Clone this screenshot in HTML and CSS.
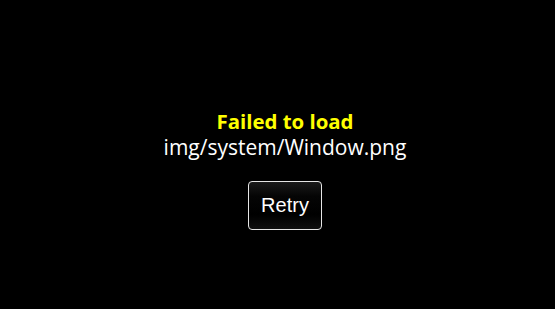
FILE: index.html
```html
<!DOCTYPE html>
<html>
<head>
<meta charset="utf-8">
<link rel="stylesheet" href="styles.css">
</head>
<body>
<div class="stage">
  <div class="error">
    <div class="title">Failed to load</div>
    <div class="path">img/system/Window.png</div>
    <button class="retry">Retry</button>
  </div>
</div>
</body>
</html>
```

FILE: styles.css
```css
html, body {
  margin: 0;
  padding: 0;
  background: #000;
  width: 555px;
  height: 309px;
  overflow: hidden;
}
.stage {
  box-sizing: border-box;
  height: 309px;
  padding: 108px 0 0 15px;
  display: flex;
  justify-content: center;
  align-items: flex-start;
}
.error {
  display: flex;
  flex-direction: column;
  align-items: center;
  font-family: "Open Sans", "Noto Sans", sans-serif;
  color: #fff;
}
.title {
  color: #ffff00;
  font-weight: 700;
  font-size: 20.4px;
  line-height: 26px;
}
.path {
  font-size: 21px;
  line-height: 26px;
}
.retry {
  margin-top: 21px;
  width: 74px;
  height: 49px;
  border: 1px solid #e6e6e6;
  border-radius: 4px;
  background: linear-gradient(#1a1a1a, #050505 30%, #000 70%, #101010);
  color: #fff;
  font-family: "Liberation Sans", Arial, sans-serif;
  font-size: 20px;
  padding: 0;
}
```
